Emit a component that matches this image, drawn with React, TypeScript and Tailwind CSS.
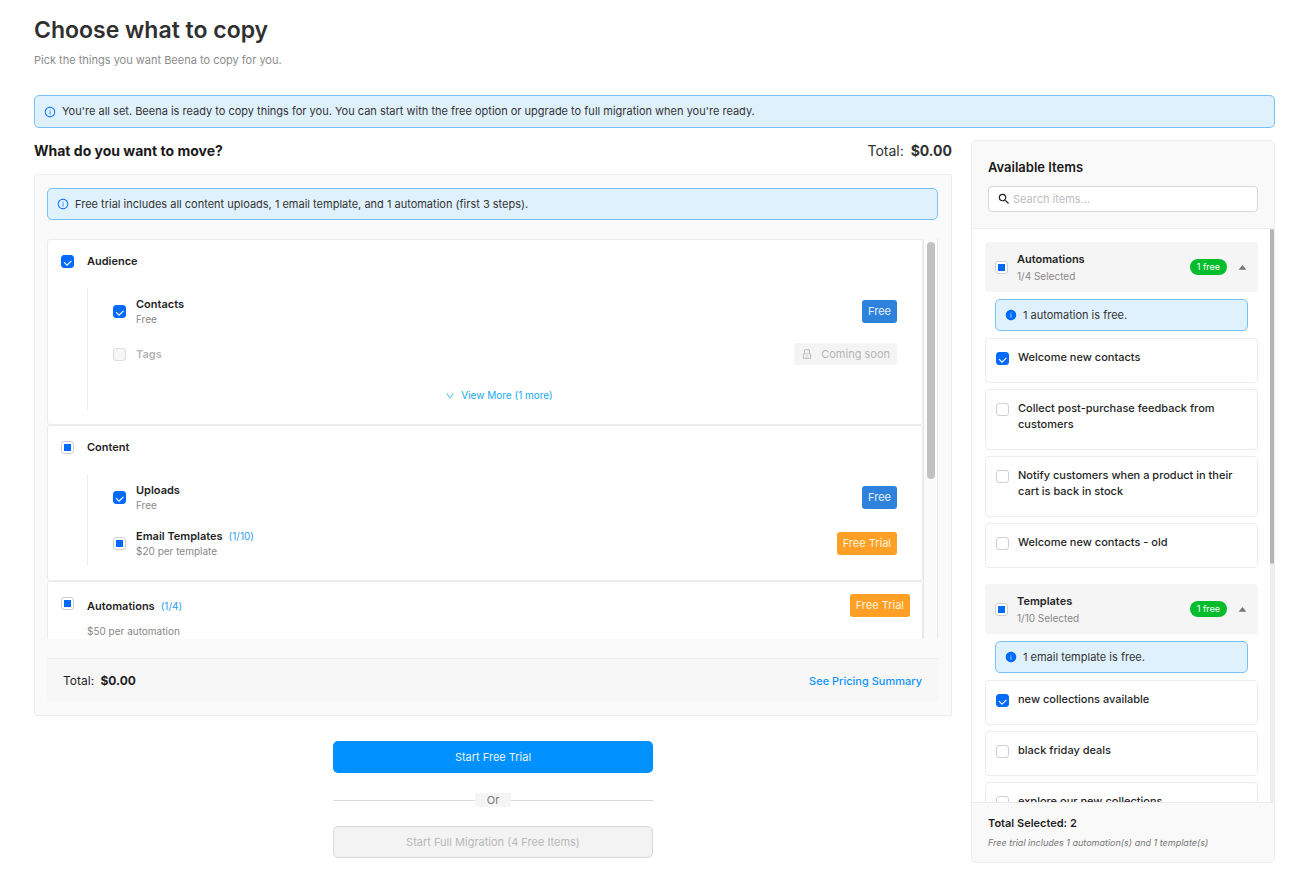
import { useEffect, useId, useRef, useState } from "react";
import type { ReactNode } from "react";
import {
  AiFillCaretUp,
  AiFillInfoCircle,
  AiOutlineDown,
  AiOutlineInfoCircle,
  AiOutlineLock,
} from "react-icons/ai";
import { MdSearch } from "react-icons/md";

type CheckState = "on" | "off" | "mixed";

function Checkbox({ id, state, disabled = false, label }: { id?: string; state: CheckState; disabled?: boolean; label?: string }) {
  const [value, setValue] = useState<CheckState>(state);
  const ref = useRef<HTMLInputElement>(null);
  useEffect(() => {
    if (ref.current) ref.current.indeterminate = value === "mixed";
  }, [value]);
  return (
    <span className="grid size-[13px] shrink-0">
      <input
        ref={ref}
        id={id}
        type="checkbox"
        aria-label={label}
        disabled={disabled}
        checked={value === "on"}
        onChange={() => setValue(value === "on" ? "off" : "on")}
        className="col-start-1 row-start-1 size-[13px] appearance-none rounded-[3px] border border-[#d0d0d0] bg-white checked:border-[#006aff] checked:bg-[#006aff] disabled:border-[#dddddd] disabled:bg-[#f7f7f7]"
      />
      {value === "on" && (
        <svg viewBox="0 0 13 13" className="pointer-events-none col-start-1 row-start-1 size-[13px]" fill="none" stroke="#fff" strokeWidth="1.1">
          <path d="M3 7.2 L6 10.2 L10.4 5.8" />
        </svg>
      )}
      {value === "mixed" && (
        <span className="pointer-events-none col-start-1 row-start-1 mt-[3px] ml-[3px] size-[7px] bg-[#006aff]" />
      )}
    </span>
  );
}

function Alert({ filled = false, children }: { filled?: boolean; children: ReactNode }) {
  return (
    <div role="status" className="flex min-h-8 flex-1 items-center gap-[6px] rounded-[5px] border border-[#78c0f9] bg-[#e0f1fe] px-[9px] text-[11px] text-[#333]">
      {filled ? (
        <AiFillInfoCircle className="size-3 shrink-0 text-[#006aff]" />
      ) : (
        <AiOutlineInfoCircle className="size-3 shrink-0 text-[#006aff]" />
      )}
      <span>{children}</span>
    </div>
  );
}

function Badge({ kind }: { kind: "free" | "trial" | "soon" }) {
  if (kind === "soon") {
    return (
      <span className="flex h-[22px] items-center gap-2 rounded-[3px] bg-[#f4f4f4] px-[7px] text-[11px] text-[#b5b5b5]">
        <AiOutlineLock className="size-3" />
        Coming soon
      </span>
    );
  }
  return kind === "free" ? (
    <span className="flex h-[23px] items-center rounded-[3px] bg-[#2f82dc] px-[6px] text-[11px] text-[#e6f1fd]">Free</span>
  ) : (
    <span className="flex h-[23px] items-center rounded-[3px] bg-[#ff9f26] px-[6px] text-[11px] text-[#fff3df]">Free Trial</span>
  );
}

type Line = { name: string; note?: string; count?: string; state: CheckState; badge: "free" | "trial" | "soon"; disabled?: boolean };

function TreeRow({ line }: { line: Line }) {
  const id = useId();
  return (
    <div className={line.note ? "flex h-[46px] items-center" : "flex h-10 items-center"}>
      <Checkbox id={id} state={line.state} disabled={line.disabled} />
      <div className="ml-[10px] flex-1">
        <div className="flex items-center gap-[6px] leading-4">
          <label htmlFor={id} className={line.disabled ? "text-[11px] font-semibold text-[#b5b5b5]" : "text-[11px] font-semibold text-[#1f1f1f]"}>
            {line.name}
          </label>
          {line.count && <span className="text-[10px] text-[#2a9df4]">{line.count}</span>}
        </div>
        {line.note && <p className="text-[10px] leading-[14px] text-[#888]">{line.note}</p>}
      </div>
      <Badge kind={line.badge} />
    </div>
  );
}

function GroupCard({ title, state, lines, more }: { title: string; state: CheckState; lines: Line[]; more?: string }) {
  const id = useId();
  return (
    <section className="rounded-[3px] border border-[#ececec] bg-white pr-[25px] pb-[14px] pl-[13px]">
      <div className="flex h-[42px] items-center gap-[13px]">
        <Checkbox id={id} state={state} />
        <label htmlFor={id} className="text-[11px] font-semibold text-[#1f1f1f]">{title}</label>
      </div>
      <div className="mt-[6px] ml-[26px] border-l border-[#ececec] pl-[25px]">
        {lines.map((line) => (
          <TreeRow key={line.name} line={line} />
        ))}
        {more && (
          <div className="flex h-9 items-center justify-center pt-[7px]">
            <button type="button" className="flex items-center gap-[6px] pr-3 text-[10px] text-[#16aaf0]">
              <AiOutlineDown className="size-[10px]" />
              {more}
            </button>
          </div>
        )}
      </div>
    </section>
  );
}

const audience: Line[] = [
  { name: "Contacts", note: "Free", state: "on", badge: "free" },
  { name: "Tags", state: "off", badge: "soon", disabled: true },
];

const content: Line[] = [
  { name: "Uploads", note: "Free", state: "on", badge: "free" },
  { name: "Email Templates", note: "$20 per template", count: "(1/10)", state: "mixed", badge: "trial" },
];

function PickRow({ name, checked }: { name: string; checked: boolean }) {
  const id = useId();
  return (
    <li className="flex items-start gap-[9px] rounded border border-[#ececec] bg-white px-[10px] pt-[10px] pb-[17px]">
      <span className="pt-[3px]">
        <Checkbox id={id} state={checked ? "on" : "off"} />
      </span>
      <label htmlFor={id} className="text-[11px] leading-4 font-medium text-[#1f1f1f]">{name}</label>
    </li>
  );
}

function PickGroup({ title, selected, notice, items }: { title: string; selected: string; notice: string; items: { name: string; checked: boolean }[] }) {
  const [open, setOpen] = useState(true);
  return (
    <section>
      <div className="flex h-[50px] items-center rounded bg-[#f5f5f5] px-[10px]">
        <Checkbox state="mixed" label={title} />
        <div className="ml-[9px] flex-1 pt-px">
          <h3 className="text-[11px] leading-[17px] font-semibold text-[#1f1f1f]">{title}</h3>
          <p className="text-[10px] leading-[17px] text-[#888]">{selected}</p>
        </div>
        <span className="flex h-4 items-center rounded-full bg-[#04bd2c] px-[7px] text-[9px] text-white">1 free</span>
        <button type="button" aria-label={"Toggle " + title} aria-expanded={open} onClick={() => setOpen(!open)} className="ml-[10px] text-[#777]">
          <AiFillCaretUp className="size-[11px]" />
        </button>
      </div>
      {open && (
        <>
          <div className="mx-[10px] my-[7px]">
            <Alert filled>{notice}</Alert>
          </div>
          <ul className="flex flex-col gap-[6px]">
            {items.map((item) => (
              <PickRow key={item.name} name={item.name} checked={item.checked} />
            ))}
          </ul>
        </>
      )}
    </section>
  );
}

const automations = [
  { name: "Welcome new contacts", checked: true },
  { name: "Collect post-purchase feedback from customers", checked: false },
  { name: "Notify customers when a product in their cart is back in stock", checked: false },
  { name: "Welcome new contacts - old", checked: false },
];

const templates = [
  { name: "new collections available", checked: true },
  { name: "black friday deals", checked: false },
  { name: "explore our new collections", checked: false },
];

export default function App() {
  const autoId = useId();
  return (
    <div className="min-h-screen bg-white pt-3 pr-9 pb-[30px] pl-[34px] font-['Inter',sans-serif]">
      <header>
        <h1 className="text-[23px] leading-9 font-semibold text-[#303030]">Choose what to copy</h1>
        <p className="mt-1 text-[11px] leading-4 text-[#8c8c8c]">Pick the things you want Beena to copy for you.</p>
      </header>
      <div className="mt-[27px] flex min-h-[33px]">
        <Alert>You're all set. Beena is ready to copy things for you. You can start with the free option or upgrade to full migration when you're ready.</Alert>
      </div>

      <div className="mt-3 flex items-start gap-[19px]">
        <main className="min-w-0 flex-1">
          <div className="flex h-5 items-center justify-between">
            <h2 className="text-[14px] font-bold text-[#1a1a1a]">What do you want to move?</h2>
            <p className="text-[14px] text-[#303030]">
              Total: <strong className="ml-[3px] font-bold">$0.00</strong>
            </p>
          </div>

          <div className="mt-[14px] rounded-[3px] border border-[#ececec] bg-[#fafafa] py-[13px] pr-[13px] pl-3">
            <Alert>Free trial includes all content uploads, 1 email template, and 1 automation (first 3 steps).</Alert>

            <div className="mt-[19px] flex h-[400px]">
              <div className="min-w-0 flex-1 overflow-y-auto [scrollbar-width:none]">
                <GroupCard title="Audience" state="on" lines={audience} more="View More (1 more)" />
                <GroupCard title="Content" state="mixed" lines={content} />
                <section className="rounded-[3px] border border-[#ececec] bg-white px-3 pt-3 pb-4">
                  <div className="flex items-start pl-px">
                    <span className="pt-[3px]">
                      <Checkbox id={autoId} state="mixed" />
                    </span>
                    <div className="ml-[13px] flex h-6 flex-1 items-center gap-[6px]">
                      <label htmlFor={autoId} className="text-[11px] font-semibold text-[#1f1f1f]">Automations</label>
                      <span className="text-[10px] text-[#2a9df4]">(1/4)</span>
                    </div>
                    <Badge kind="trial" />
                  </div>
                  <p className="mt-[6px] ml-[27px] text-[10px] leading-[14px] text-[#888]">$50 per automation</p>
                </section>
              </div>
              <div aria-hidden="true" className="w-[15px] shrink-0 border-x border-[#e8e8e8] bg-[#fafafa] px-[3px] pt-[3px]">
                <div className="h-[237px] w-2 rounded-full bg-[#c1c1c1]" />
              </div>
            </div>

            <footer className="mt-[19px] flex h-11 items-center justify-between rounded-b border-t border-[#ececec] bg-[#f7f7f7] px-4 pt-px">
              <p className="text-[12px] text-[#1f1f1f]">
                Total: <strong className="ml-[3px] font-bold">$0.00</strong>
              </p>
              <a href="#pricing" className="text-[11px] font-medium text-[#1194fb]">See Pricing Summary</a>
            </footer>
          </div>

          <div className="mx-auto mt-[25px] flex w-80 flex-col">
            <button type="button" className="h-8 rounded-[5px] bg-[#0091ff] text-[11px] text-[#eaf5ff]">Start Free Trial</button>
            <div className="mt-5 mb-[19px] flex h-[14px] items-center">
              <span className="h-px flex-1 bg-[#d9d9d9]" />
              <span className="bg-[#f5f5f5] px-3 text-[11px] leading-[14px] text-[#777]">Or</span>
              <span className="h-px flex-1 bg-[#d9d9d9]" />
            </div>
            <button type="button" disabled className="h-8 rounded-[5px] border border-[#d9d9d9] bg-[#f3f3f3] text-[11px] text-[#b8b8b8]">
              Start Full Migration (4 Free Items)
            </button>
          </div>
        </main>

        <aside className="w-[304px] shrink-0 overflow-hidden rounded-[5px] border border-[#ececec] bg-white">
          <div className="h-[88px] border-b border-[#ececec] bg-[#f9f9f9] px-4 pt-4">
            <h2 className="text-[13px] leading-5 font-semibold text-[#1a1a1a]">Available Items</h2>
            <label className="mt-[9px] flex h-[26px] items-center gap-[2px] rounded border border-[#d6d6d6] bg-white px-2">
              <MdSearch className="size-[14px] shrink-0 text-[#222]" />
              <input type="text" aria-label="Search items" placeholder="Search items..." className="min-w-0 flex-1 bg-transparent text-[11px] outline-none placeholder:text-[#bdbdbd]" />
            </label>
          </div>
          <div className="flex h-[573px]">
            <div className="flex min-w-0 flex-1 flex-col gap-4 overflow-y-auto pt-[13px] pr-3 pb-4 pl-[13px] [scrollbar-width:none]">
              <PickGroup title="Automations" selected="1/4 Selected" notice="1 automation is free." items={automations} />
              <PickGroup title="Templates" selected="1/10 Selected" notice="1 email template is free." items={templates} />
            </div>
            <div aria-hidden="true" className="w-1 shrink-0 bg-[#eeeeee]">
              <div className="h-[335px] rounded-full bg-[#b5b5b5]" />
            </div>
          </div>
          <div className="border-t border-[#ececec] bg-[#f9f9f9] px-4 pt-3 pb-[11px]">
            <p className="text-[11px] leading-4 font-semibold text-[#1f1f1f]">Total Selected: 2</p>
            <p className="mt-1 text-[9px] leading-4 text-[#777] italic">Free trial includes 1 automation(s) and 1 template(s)</p>
          </div>
        </aside>
      </div>
    </div>
  );
}
